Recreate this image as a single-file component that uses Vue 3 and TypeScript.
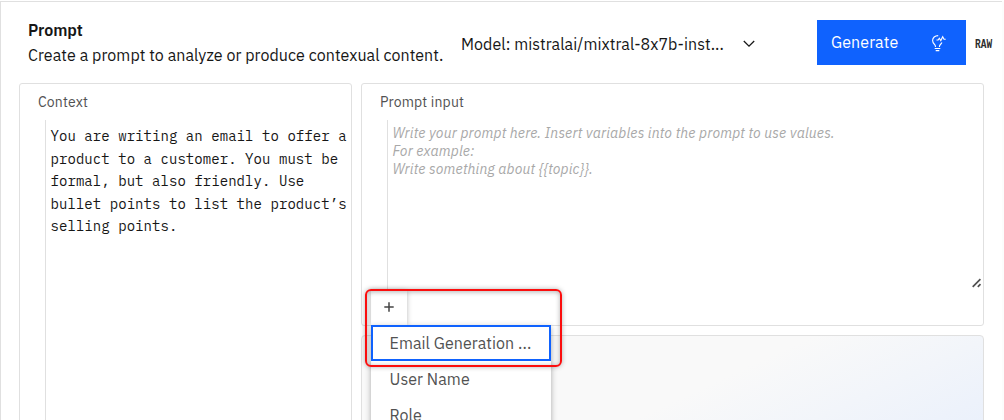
<script setup lang="ts">
import { ref } from 'vue'

const context = [
  'You are writing an email to offer a',
  'product to a customer. You must be',
  'formal, but also friendly. Use',
  'bullet points to list the product’s',
  'selling points.',
]
const hints = [
  'Write your prompt here. Insert variables into the prompt to use values.',
  'For example:',
  'Write something about {{topic}}.',
]
const variables = ['Email Generation ...', 'User Name', 'Role']
const selected = ref(0)
</script>

<template>
  <div class="page">
    <header class="header">
      <div class="intro">
        <h1>Prompt</h1>
        <p>Create a prompt to analyze or produce contexual content.</p>
      </div>
      <div class="model">
        <span class="model-name">Model: mistralai/mixtral-8x7b-inst...</span>
        <svg class="chevron" width="12" height="8" viewBox="0 0 12 8"><path d="M.8 1 6 6.2 11.2 1" fill="none" stroke="#161616" stroke-width="1.3" /></svg>
      </div>
      <button class="generate">
        <span>Generate</span>
        <svg width="16" height="18" viewBox="0 0 16 18" fill="none" stroke="#fff" stroke-width="1.1">
          <path d="M7.2 1.6C3.9 1.6 1.6 3.7 1.6 6.5c0 2 .9 3 2 4 .7.7.9 1.2.9 2.4M8.4 12.9c0-1.2.3-1.7 1-2.4.7-.7 1.2-1.2 1.5-2M3.7 14.5h5.6M4.7 16.6h3.6" />
          <path d="M5.5 6h1.7l1.1-1.7 1.5 2.3 1.9-3.9 1.3 2.6h1.7" />
        </svg>
      </button>
      <svg class="raw" width="19" height="14" viewBox="0 0 19 14">
        <text transform="translate(0 11.6) scale(.76 1)" x="0" y="0" textLength="22.5">RAW</text>
      </svg>
    </header>

    <main class="panels">
      <section class="panel context">
        <h2>Context</h2>
        <div class="field">
          <div v-for="line in context" :key="line">{{ line }}</div>
        </div>
      </section>
      <div class="column">
        <section class="panel input">
          <h2>Prompt input</h2>
          <div class="field prompt">
            <div v-for="line in hints" :key="line">{{ line }}</div>
          </div>
          <svg class="resize" width="10" height="10" viewBox="0 0 10 10"><path d="M.7 8.8 8.4 1.1M5.8 8.8l2.7-2.7" fill="none" stroke="#505050" stroke-width="1.7" /></svg>
          <div class="picker">
            <button class="add" aria-label="Add variable">
              <svg width="10" height="10" viewBox="0 0 10 10"><path d="M5 .3v9.4M.3 5h9.4" stroke="#444" stroke-width="1.5" /></svg>
            </button>
            <ul class="menu">
              <li v-for="(v, i) in variables" :key="v" :class="{ selected: i === selected }" @click="selected = i">{{ v }}</li>
            </ul>
            <div class="highlight"></div>
          </div>
        </section>
        <section class="panel output"></section>
      </div>
    </main>
  </div>
</template>

<style>
html, body { margin: 0; overflow: hidden; background: #fff; }
</style>

<style scoped>
* { box-sizing: border-box; }
.page {
  width: 1002px; height: 419px; margin-top: 1px; overflow: hidden;
  border-top: 1px solid #e0e0e0; border-left: 1px solid #e0e0e0;
  background: #fff; color: #161616;
  font: 16px "IBM Plex Sans", Roboto, "Liberation Sans", sans-serif;
  box-shadow: 2px 0 0 #fcfcfc;
}
.header { height: 81px; display: flex; align-items: flex-start; }
.intro { width: 433px; padding: 17px 0 0 27px; white-space: nowrap; }
h1, h2, p { margin: 0; }
h1 { font-size: 16px; line-height: 23px; font-weight: 600; letter-spacing: -.05px; }
p { font-size: 16px; line-height: 26px; letter-spacing: .07px; }
.model { width: 383px; padding: 31px 0 0 27px; display: flex; line-height: 22px; white-space: nowrap; }
.model-name { width: 283px; letter-spacing: .06px; }
.chevron { margin: 7px 0 0 -1px; }
.generate {
  width: 149px; height: 45px; margin-top: 18px; padding: 0 19px 0 14px; border: 0;
  display: flex; justify-content: space-between; align-items: center;
  background: #0f62fe; color: #fff; font: inherit; letter-spacing: .1px;
}
.generate span { padding-bottom: 1px; }
.raw { margin: 34px 0 0 9px; }
.raw text { font: bold 12.5px "Liberation Mono", monospace; fill: #2c2c2c; }
.panels { display: flex; gap: 9px; padding-left: 18px; }
.panel { border: 1px solid #e0e0e0; border-radius: 3px; background: #fff; }
.context { width: 333px; height: 360px; }
h2 { font-size: 14px; line-height: 19px; font-weight: 400; color: #525252; letter-spacing: .16px; padding: 9px 0 0 18px; }
.field {
  margin: 8px 0 0 25px; height: 320px; border-left: 1px solid #e0e0e0; padding: 5px 0 0 4.5px;
  font: 14px/22.5px "IBM Plex Mono", "Liberation Mono", monospace; letter-spacing: .06px; white-space: pre;
}
.column { width: 623px; }
.input { position: relative; height: 243px; }
.prompt { height: 171px; padding-top: 4px; font: italic 14px/18px "IBM Plex Sans", Roboto, sans-serif; letter-spacing: .15px; color: #a8a8a8; }
.resize { position: absolute; right: 1px; bottom: 37px; }
.picker { position: absolute; left: 9px; top: 207px; width: 180px; z-index: 2; }
.add {
  width: 36px; height: 34px; padding: 0 0 3px; border: 0; background: #fff; display: grid; place-items: center;
  box-shadow: 0 0 5px rgba(0, 0, 0, .28);
}
.menu { position: relative; list-style: none; margin: 0; padding: 0; background: #fff; box-shadow: 0 2px 6px rgba(0, 0, 0, .32); }
.menu li { height: 36px; padding-left: 18.5px; line-height: 37px; color: #525252; white-space: nowrap; letter-spacing: .06px; }
.menu .selected { box-shadow: inset 0 0 0 2px #0f62fe; }
.highlight {
  position: absolute; left: -6px; top: -2px; width: 197px; height: 78px; border: 2px solid #fb0d0d; border-radius: 6px;
  box-shadow: 0 0 5px rgba(0, 0, 0, .3), inset 0 1px 5px rgba(0, 0, 0, .3);
}
.output { margin-top: 9px; height: 180px; border-radius: 4px; background: linear-gradient(155deg, #f9f9f9 45%, #f2f5fa 63%, #edf2fb 75%, #e6eefc 95%); }
</style>
